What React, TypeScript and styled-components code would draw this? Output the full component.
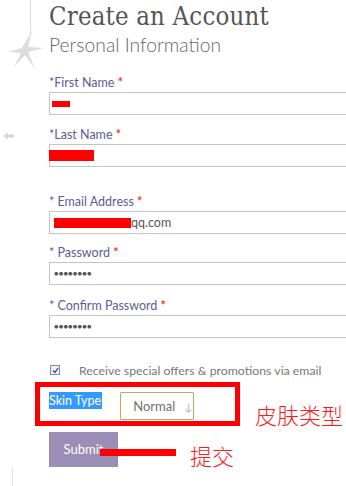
import React from "react";
import styled, { createGlobalStyle } from "styled-components";

const GlobalStyle = createGlobalStyle`
  html, body {
    margin: 0;
    padding: 0;
    background: #ffffff;
  }
  body {
    font-family: "Lato", "Open Sans", sans-serif;
  }
`;

const Page = styled.div`
  position: relative;
  width: 346px;
  height: 486px;
  overflow: hidden;
  padding-left: 49px;
  box-sizing: border-box;
`;

const TopLine = styled.div`
  position: absolute;
  left: 30px;
  top: 0;
  width: 1px;
  height: 36px;
  background: #d8d8d8;
`;

const StarMark = styled.svg`
  position: absolute;
  left: 8px;
  top: 31px;
`;

const BackMark = styled.svg`
  position: absolute;
  left: 2px;
  top: 131px;
`;

const BottomLine = styled.div`
  position: absolute;
  left: 12px;
  top: 467px;
  width: 1px;
  height: 20px;
  background: #e2e2e2;
`;

const Title = styled.h1`
  margin: 0;
  padding-top: 1px;
  font-family: "DejaVu Serif Condensed", "DejaVu Serif", serif;
  font-weight: normal;
  font-size: 25.5px;
  line-height: 30px;
  color: #555555;
  letter-spacing: 0.2px;
`;

const Subtitle = styled.h2`
  margin: 2px 0 0;
  font-family: "Lato", sans-serif;
  font-weight: 300;
  font-size: 19.3px;
  line-height: 24px;
  color: #666666;
`;

const Field = styled.div<{ $top: number }>`
  margin-top: ${(p) => p.$top}px;
`;

const Label = styled.label`
  display: block;
  font-size: 12.5px;
  line-height: 15px;
  color: #5c5c96;
  margin-bottom: 2px;
`;

const Req = styled.span`
  color: #e8412c;
  font-weight: bold;
`;

const TextBox = styled.div`
  position: relative;
  width: 310px;
  height: 23px;
  box-sizing: border-box;
  border: 1px solid #c4c4c4;
  border-right: none;
  display: flex;
  align-items: center;
  padding-left: 3px;
  font-size: 12.5px;
  color: #555;
`;

const Redact = styled.span<{ $w: number; $h: number; $dx?: number }>`
  display: inline-block;
  width: ${(p) => p.$w}px;
  height: ${(p) => p.$h}px;
  margin-left: ${(p) => p.$dx ?? 0}px;
  background: #ff0000;
`;

const Dots = styled.span`
  font-size: 7.5px;
  letter-spacing: 0.2px;
  color: #555;
  margin-left: 1px;
`;

const CheckRow = styled.div`
  margin-top: 24px;
  display: flex;
  align-items: center;
  height: 16px;
`;

const CheckBox = styled.span`
  width: 8px;
  height: 8px;
  border: 1px solid #8a8a9a;
  background: #eef0f6;
  display: flex;
  align-items: center;
  justify-content: center;
  margin-left: 1px;
  margin-right: 19px;
`;

const CheckText = styled.span`
  font-size: 12.3px;
  color: #777777;
`;

const AnnotRow = styled.div`
  margin-top: 4px;
  margin-left: -14px;
  display: flex;
  align-items: flex-end;
`;

const RedBox = styled.div`
  width: 205px;
  height: 44px;
  box-sizing: border-box;
  border: 5px solid #ff0000;
  padding: 5px 0 0 9px;
  display: flex;
  align-items: flex-start;
`;

const SkinLabel = styled.span`
  background: #3399ff;
  color: #ffffff;
  font-size: 12.5px;
  line-height: 17px;
  height: 17px;
  padding-right: 1px;
  margin-right: 18px;
`;

const Select = styled.div`
  width: 74px;
  height: 28px;
  box-sizing: border-box;
  border: 1px solid #c9a45e;
  border-radius: 1px;
  display: flex;
  align-items: center;
  padding-left: 12px;
  font-size: 13px;
  color: #707070;
`;

const Arrow = styled.span`
  color: #b8b8b8;
  font-size: 11px;
  margin-left: 9px;
`;

const Note = styled.span<{ $ml: number; $mt?: number }>`
  margin-left: ${(p) => p.$ml}px;
  margin-top: ${(p) => p.$mt ?? 0}px;
  font-family: "Noto Sans CJK SC", sans-serif;
  font-size: 22px;
  line-height: 23px;
  color: #ff1a1a;
  font-weight: 300;
`;

const SubmitRow = styled.div`
  margin-top: 6px;
  display: flex;
  align-items: flex-start;
`;

const SubmitButton = styled.button`
  width: 69px;
  height: 35px;
  border: none;
  background: #9a8eb6;
  color: #ffffff;
  font-family: "Lato", sans-serif;
  font-size: 13px;
  padding: 0 0 2px;
  margin: 0;
`;

const Pointer = styled.div`
  width: 76px;
  height: 7px;
  background: #ff0000;
  margin-left: -18px;
  margin-top: 17px;
`;

const fields = [
  { label: "*First Name", top: 18, value: <Redact $w={18} $h={6} $dx={-1} /> },
  { label: "*Last Name", top: 12, value: <Redact $w={45} $h={11} $dx={-4} /> },
  {
    label: "* Email Address",
    top: 27,
    value: (
      <>
        <Redact $w={77} $h={10} $dx={1} />
        <span>qq.com</span>
      </>
    ),
  },
  { label: "* Password", top: 11, value: <Dots>●●●●●●●●</Dots> },
  { label: "* Confirm Password", top: 13, value: <Dots>●●●●●●●●</Dots> },
];

export default function App() {
  return (
    <>
      <GlobalStyle />
      <Page>
        <TopLine />
        <StarMark width="36" height="40" viewBox="0 0 36 40">
          <polygon
            points="24,0 20,16 36,17 20,21 27,38 17,24 6,36 13,22 0,21 14,17"
            fill="#dcdcdc"
          />
        </StarMark>
        <BackMark width="14" height="10" viewBox="0 0 14 10">
          <path
            d="M1 5 L6 1.5 L6 3.5 L12 3.5 L12 6.5 L6 6.5 L6 8.5 Z"
            fill="#d6d6d6"
          />
        </BackMark>
        <BottomLine />

        <Title>Create an Account</Title>
        <Subtitle>Personal Information</Subtitle>

        {fields.map((f) => (
          <Field key={f.label} $top={f.top}>
            <Label>
              {f.label} <Req>*</Req>
            </Label>
            <TextBox>{f.value}</TextBox>
          </Field>
        ))}

        <CheckRow>
          <CheckBox>
            <svg width="7" height="7" viewBox="0 0 7 7">
              <path d="M1 3.5 L3 5.5 L6 1" stroke="#3a4a8a" strokeWidth="1.3" fill="none" />
            </svg>
          </CheckBox>
          <CheckText>Receive special offers &amp; promotions via email</CheckText>
        </CheckRow>

        <AnnotRow>
          <RedBox>
            <SkinLabel>Skin Type</SkinLabel>
            <Select>
              Normal<Arrow>↓</Arrow>
            </Select>
          </RedBox>
          <Note $ml={15}>皮肤类型</Note>
        </AnnotRow>

        <SubmitRow>
          <SubmitButton>Submit</SubmitButton>
          <Pointer />
          <Note $ml={14} $mt={12}>提交</Note>
        </SubmitRow>
      </Page>
    </>
  );
}
